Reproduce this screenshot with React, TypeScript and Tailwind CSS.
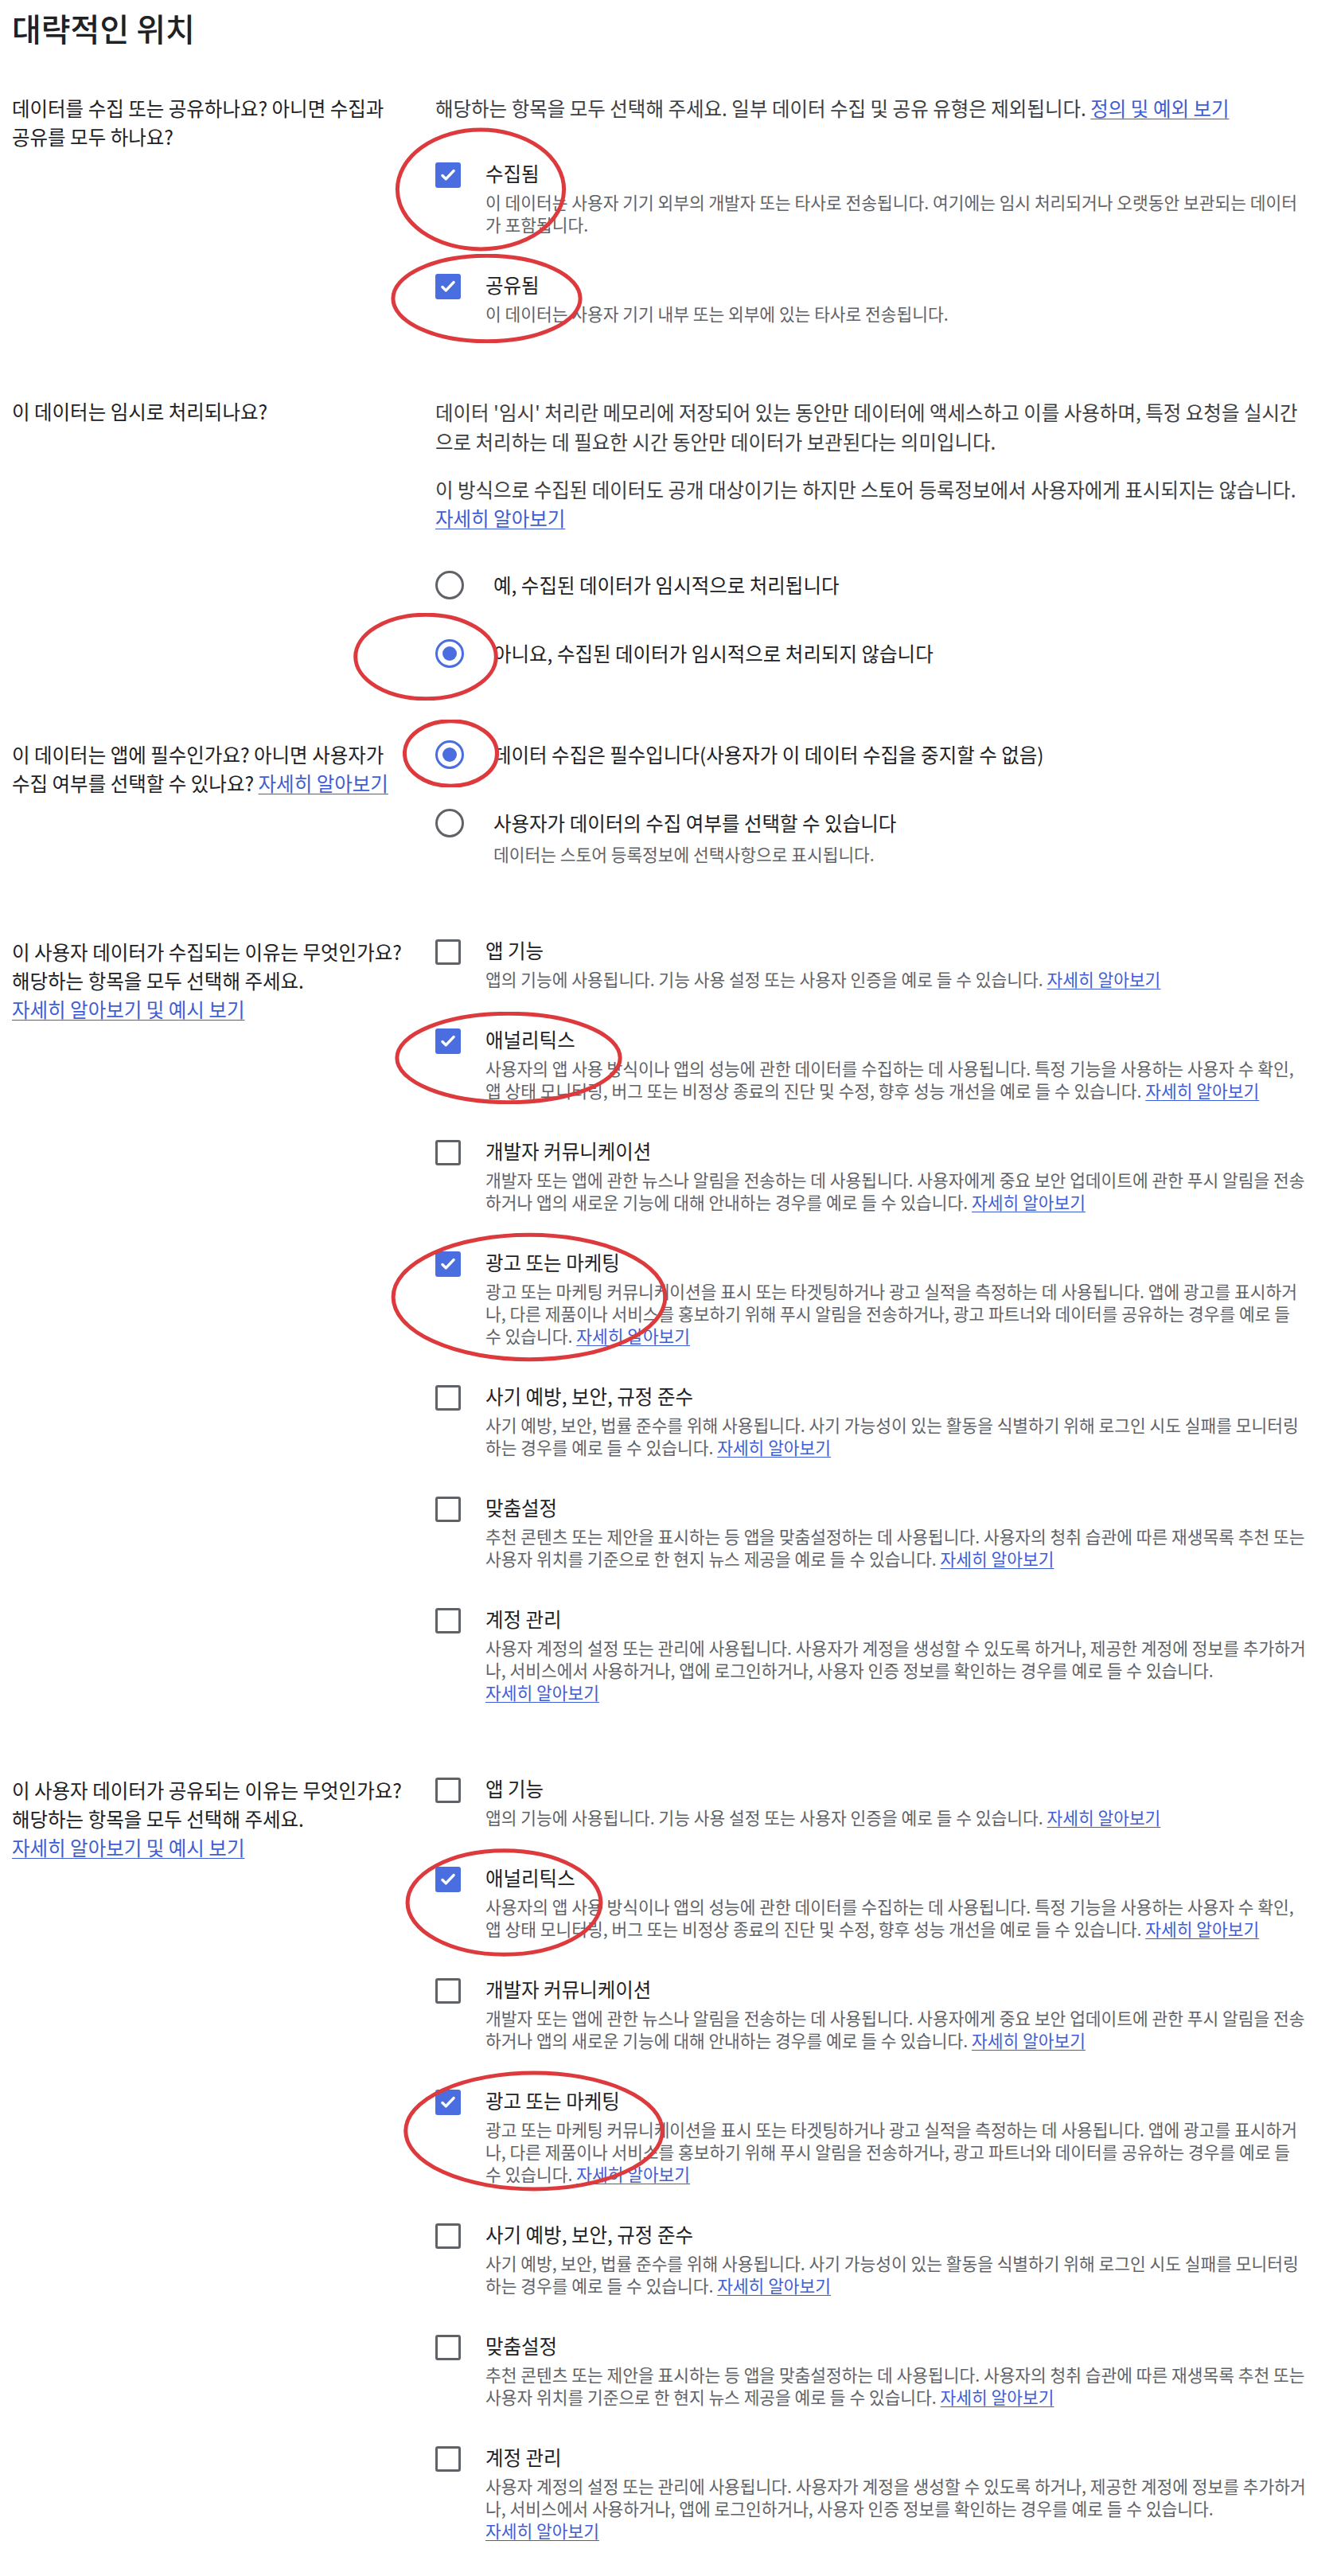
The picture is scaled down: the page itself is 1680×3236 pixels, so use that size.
import type { ReactNode } from 'react'

function A({ children }: { children: ReactNode }) {
  return <a className="whitespace-nowrap text-[#3f5dd4] underline decoration-1 underline-offset-[3px]">{children}</a>
}

const more = <A>자세히 알아보기</A>

function Lines({ lines }: { lines: ReactNode[] }) {
  return (
    <>
      {lines.map((l, i) => (
        <span key={i} className="block whitespace-nowrap">
          {l}
        </span>
      ))}
    </>
  )
}

function Mark({ className }: { className: string }) {
  return (
    <svg className={`pointer-events-none absolute ${className}`} viewBox="0 0 100 100" preserveAspectRatio="none">
      <ellipse cx="50" cy="50" rx="48" ry="48" fill="none" stroke="#dd3a3e" strokeWidth="5" vectorEffect="non-scaling-stroke" />
    </svg>
  )
}

function Box({ on }: { on?: boolean }) {
  if (on)
    return (
      <span className="mt-[2px] flex h-8 w-8 shrink-0 items-center justify-center rounded-[3px] bg-[#4a6ee0]">
        <svg viewBox="0 0 24 24" className="h-[26px] w-[26px]" fill="none" stroke="white" strokeWidth="3.2" strokeLinecap="round" strokeLinejoin="round">
          <path d="M5.5 12.5l4 4L18.5 7" />
        </svg>
      </span>
    )
  return <span className="mt-[2px] h-8 w-8 shrink-0 rounded-[3px] border-[3px] border-[#5f6368]" />
}

function Radio({ on }: { on?: boolean }) {
  if (on)
    return (
      <span className="flex h-9 w-9 shrink-0 items-center justify-center rounded-full border-[3px] border-[#4a6ee0]">
        <span className="h-[18px] w-[18px] rounded-full bg-[#4a6ee0]" />
      </span>
    )
  return <span className="h-9 w-9 shrink-0 rounded-full border-[3px] border-[#5f6368]" />
}

function CheckItem({ title, on, mark, lines }: { title: string; on?: boolean; mark?: ReactNode; lines: ReactNode[] }) {
  return (
    <div className="relative flex items-start gap-[31px]">
      <Box on={on} />
      <div className="flex-1">
        <p className="text-[24.5px] leading-[32px] text-[#202124]">{title}</p>
        <p className="mt-[6px] text-[21.45px] leading-[28px] text-[#5f6368]">
          <Lines lines={lines} />
        </p>
      </div>
      {mark}
    </div>
  )
}

function RadioItem({ label, on, mark, desc }: { label: string; on?: boolean; mark?: ReactNode; desc?: string }) {
  return (
    <div className="relative flex items-start gap-[37px]">
      <Radio on={on} />
      <div className="flex-1">
        <p className="text-[24.5px] leading-[36px] text-[#202124]">{label}</p>
        {desc && <p className="mt-[7px] text-[21.45px] leading-[28px] text-[#5f6368]">{desc}</p>}
      </div>
      {mark}
    </div>
  )
}

function Section({ q, children }: { q: ReactNode; children: ReactNode }) {
  return (
    <div className="grid grid-cols-[532px_1085px] items-start">
      <div className="text-[24.5px] leading-[36px] text-[#202124]">{q}</div>
      <div>{children}</div>
    </div>
  )
}

// 수집/공유 목적 목록 (두 섹션이 같은 항목을 씀)
function Purposes({ marks }: { marks: [ReactNode, ReactNode] }) {
  return (
    <div className="flex flex-col gap-[46px]">
      <CheckItem title="앱 기능" lines={[<>앱의 기능에 사용됩니다. 기능 사용 설정 또는 사용자 인증을 예로 들 수 있습니다. {more}</>]} />
      <CheckItem
        title="애널리틱스"
        on
        mark={marks[0]}
        lines={[
          '사용자의 앱 사용 방식이나 앱의 성능에 관한 데이터를 수집하는 데 사용됩니다. 특정 기능을 사용하는 사용자 수 확인,',
          <>앱 상태 모니터링, 버그 또는 비정상 종료의 진단 및 수정, 향후 성능 개선을 예로 들 수 있습니다. {more}</>,
        ]}
      />
      <CheckItem
        title="개발자 커뮤니케이션"
        lines={[
          '개발자 또는 앱에 관한 뉴스나 알림을 전송하는 데 사용됩니다. 사용자에게 중요 보안 업데이트에 관한 푸시 알림을 전송',
          <>하거나 앱의 새로운 기능에 대해 안내하는 경우를 예로 들 수 있습니다. {more}</>,
        ]}
      />
      <CheckItem
        title="광고 또는 마케팅"
        on
        mark={marks[1]}
        lines={[
          '광고 또는 마케팅 커뮤니케이션을 표시 또는 타겟팅하거나 광고 실적을 측정하는 데 사용됩니다. 앱에 광고를 표시하거',
          '나, 다른 제품이나 서비스를 홍보하기 위해 푸시 알림을 전송하거나, 광고 파트너와 데이터를 공유하는 경우를 예로 들',
          <>수 있습니다. {more}</>,
        ]}
      />
      <CheckItem
        title="사기 예방, 보안, 규정 준수"
        lines={[
          '사기 예방, 보안, 법률 준수를 위해 사용됩니다. 사기 가능성이 있는 활동을 식별하기 위해 로그인 시도 실패를 모니터링',
          <>하는 경우를 예로 들 수 있습니다. {more}</>,
        ]}
      />
      <CheckItem
        title="맞춤설정"
        lines={[
          '추천 콘텐츠 또는 제안을 표시하는 등 앱을 맞춤설정하는 데 사용됩니다. 사용자의 청취 습관에 따른 재생목록 추천 또는',
          <>사용자 위치를 기준으로 한 현지 뉴스 제공을 예로 들 수 있습니다. {more}</>,
        ]}
      />
      <CheckItem
        title="계정 관리"
        lines={[
          '사용자 계정의 설정 또는 관리에 사용됩니다. 사용자가 계정을 생성할 수 있도록 하거나, 제공한 계정에 정보를 추가하거',
          '나, 서비스에서 사용하거나, 앱에 로그인하거나, 사용자 인증 정보를 확인하는 경우를 예로 들 수 있습니다.',
          more,
        ]}
      />
    </div>
  )
}

export default function App() {
  return (
    <div className="relative min-h-[3236px] bg-white pb-[43px] pl-[15px] font-['Noto_Sans_CJK_KR','Noto_Sans',sans-serif]">
      <h1 className="pt-[11px] text-[40px] font-medium leading-[48px] text-[#202124]">대략적인 위치</h1>

      <div className="mt-[59px] flex flex-col gap-[91px]">
        <Section q={<>데이터를 수집 또는 공유하나요? 아니면 수집과<br />공유를 모두 하나요?</>}>
          <p className="whitespace-nowrap text-[24.5px] leading-[36px] text-[#3c4043]">
            해당하는 항목을 모두 선택해 주세요. 일부 데이터 수집 및 공유 유형은 제외됩니다. <A>정의 및 예외 보기</A>
          </p>
          <div className="mt-[48px] flex flex-col gap-[46px]">
            <CheckItem
              title="수집됨"
              on
              mark={<Mark className="left-[-52px] top-[-42px] h-[156px] w-[218px]" />}
              lines={['이 데이터는 사용자 기기 외부의 개발자 또는 타사로 전송됩니다. 여기에는 임시 처리되거나 오랫동안 보관되는 데이터', '가 포함됩니다.']}
            />
            <CheckItem
              title="공유됨"
              on
              mark={<Mark className="left-[-58px] top-[-23px] h-[112px] w-[245px]" />}
              lines={['이 데이터는 사용자 기기 내부 또는 외부에 있는 타사로 전송됩니다.']}
            />
          </div>
        </Section>

        <Section q="이 데이터는 임시로 처리되나요?">
          <p className="text-[24.5px] leading-[37px] text-[#3c4043]">
            <Lines
              lines={[
                "데이터 '임시' 처리란 메모리에 저장되어 있는 동안만 데이터에 액세스하고 이를 사용하며, 특정 요청을 실시간",
                '으로 처리하는 데 필요한 시간 동안만 데이터가 보관된다는 의미입니다.',
              ]}
            />
          </p>
          <p className="mt-[24px] text-[24.5px] leading-[36px] text-[#3c4043]">
            <Lines lines={['이 방식으로 수집된 데이터도 공개 대상이기는 하지만 스토어 등록정보에서 사용자에게 표시되지는 않습니다.', more]} />
          </p>
          <div className="mt-[48px] flex flex-col gap-[50px]">
            <RadioItem label="예, 수집된 데이터가 임시적으로 처리됩니다" />
            <RadioItem label="아니요, 수집된 데이터가 임시적으로 처리되지 않습니다" on mark={<Mark className="left-[-104px] top-[-33px] h-[110px] w-[184px]" />} />
          </div>
        </Section>

        <Section q={<>이 데이터는 앱에 필수인가요? 아니면 사용자가<br />수집 여부를 선택할 수 있나요? {more}</>}>
          <div className="flex flex-col gap-[50px]">
            <RadioItem label="데이터 수집은 필수입니다(사용자가 이 데이터 수집을 중지할 수 없음)" on mark={<Mark className="left-[-41px] top-[-26px] h-[85px] w-[121px]" />} />
            <RadioItem label="사용자가 데이터의 수집 여부를 선택할 수 있습니다" desc="데이터는 스토어 등록정보에 선택사항으로 표시됩니다." />
          </div>
        </Section>

        <Section q={<>이 사용자 데이터가 수집되는 이유는 무엇인가요?<br />해당하는 항목을 모두 선택해 주세요.<br /><A>자세히 알아보기 및 예시 보기</A></>}>
          <Purposes
            marks={[
              <Mark key="a" className="left-[-54px] top-[-19px] h-[116px] w-[292px]" />,
              <Mark key="b" className="left-[-60px] top-[-22px] h-[163px] w-[356px]" />,
            ]}
          />
        </Section>

        <Section q={<>이 사용자 데이터가 공유되는 이유는 무엇인가요?<br />해당하는 항목을 모두 선택해 주세요.<br /><A>자세히 알아보기 및 예시 보기</A></>}>
          <Purposes
            marks={[
              <Mark key="a" className="left-[-40px] top-[-21px] h-[136px] w-[253px]" />,
              <Mark key="b" className="left-[-44px] top-[-22px] h-[152px] w-[336px]" />,
            ]}
          />
        </Section>
      </div>
    </div>
  )
}
